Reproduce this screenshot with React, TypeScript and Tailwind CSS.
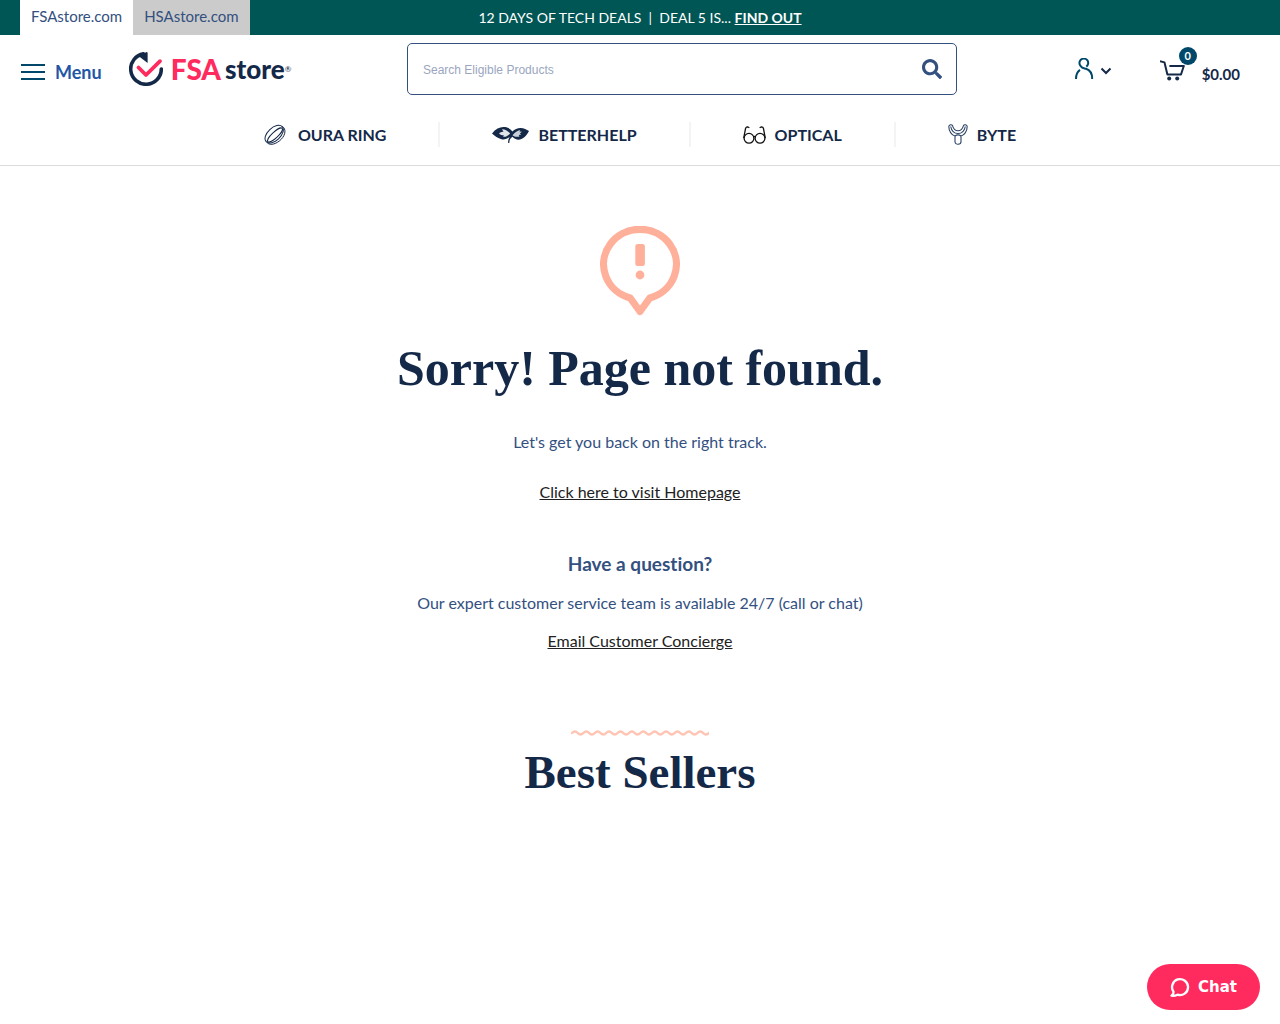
import type { ReactNode } from "react";
import { FaSearch } from "react-icons/fa";

const WAVE = "M1 4q2.9-3 5.7 0" + "t5.7 0".repeat(23);

function LogoMark() {
  return (
    <svg viewBox="0 0 34 34" className="h-[34px] w-[34px]" fill="none" aria-hidden="true">
      <path d="M14.500 1.900A15.300 15.300 0 1 0 32.300 17" stroke="#142848" strokeWidth="3.6" strokeLinecap="round" />
      <path d="M9.500 4 17.600 0c.6 0 1 .3 1 .9v10z" fill="#142848" />
      <path d="M9.500 15.500 17 23 31 9.200" stroke="#ff2b5f" strokeWidth="3.8" strokeLinecap="round" strokeLinejoin="round" />
    </svg>
  );
}

function UserIcon() {
  return (
    <svg viewBox="0 0 20 22" className="h-[22px] w-5" fill="none" stroke="#00486a" strokeWidth="2" aria-hidden="true">
      <path d="M12.300 8.600A4.400 4.400 0 1 0 6.800 8.200C8 10.300 10 10.200 12 10.800 16 12 18.200 15.500 18.200 21" />
      <path d="M2 21c0-4 1.200-7.200 4-9.100" />
    </svg>
  );
}

function CartIcon() {
  return (
    <svg viewBox="0 0 25 21" className="h-[21px] w-[25px]" fill="none" stroke="#142848" strokeWidth="2" aria-hidden="true">
      <path d="M0 1.200 4.500 2.400 7.400 14.500H21L23.800 6H9.400" strokeLinejoin="round" />
      <circle cx="9.200" cy="18.600" r="2" fill="#142848" stroke="none" />
      <circle cx="17.200" cy="18.600" r="2" fill="#142848" stroke="none" />
    </svg>
  );
}

function RingIcon() {
  return (
    <svg viewBox="0 0 22 22" className="h-[22px] w-[22px]" fill="none" stroke="#142848" aria-hidden="true">
      <ellipse cx="10.200" cy="10.200" rx="11" ry="6.400" transform="rotate(-43 10.200 10.200)" />
      <path d="M18.500 2.500c3.500 2.300 3.300 8-1.200 12.700S6.500 21.800 3.500 19" />
      <ellipse cx="11" cy="11" rx="9.800" ry="3" transform="rotate(-43 11 11)" />
    </svg>
  );
}

function LeavesIcon() {
  return (
    <svg viewBox="0 0 37 18" className="h-[18px] w-[37px]" aria-hidden="true">
      <path d="M0 7.500C4 2.500 8.500.5 13 1.100c3.500.5 5.800 2.400 7.400 4.400C22.500 3.300 25.500 2 28.500 2c3.500 0 6 1.500 8.500 3-2.500 5-6.500 8.500-10.500 8.700-2.500 0-4.500-1.200-6-2.900-2.200 1.600-3.200 3.200-3.200 6.200h-1.200c0-3 .6-4.700 1.700-6.200C15 13 12 14 9.500 13.300 6 12.200 2.500 10 0 7.500z" fill="#142848" />
      <path d="M7 7.200c1.500-1.200 3-1.700 4.500-1.400L10 3.200c3.500 0 6 2 8.200 4.300L16.500 9c-1.700 1.500-3.500 2-5.500 1.800l1-1.400c-2 0-4-.7-5-2.200z" fill="#dfe3ea" />
      <path d="M20.500 9.200c2-2.600 4.500-4.500 7.800-5.300l-.8 1.700 2.500.2-2.200 1.600 1.500 1.200-2.500.4.700 1.500c-2.500.6-5 .3-7-1.300z" fill="#c9d0da" />
    </svg>
  );
}

function GlassesIcon() {
  return (
    <svg viewBox="0 0 23 18" className="h-[18px] w-[23px]" fill="none" stroke="#111" strokeWidth="1.300" strokeLinecap="round" aria-hidden="true">
      <circle cx="6" cy="12.300" r="4.900" />
      <circle cx="17" cy="12.300" r="4.900" />
      <path d="M10.700 10.700q.8-.7 1.600 0M.8 11.500 2.600 2.300Q3.200.7 4.700.9l1.200.6M22.200 11.500 20.400 2.300Q19.800.7 18.300.9l-1.200.6" />
    </svg>
  );
}

function AlignerIcon() {
  return (
    <svg viewBox="0 0 20 21" className="h-[21px] w-5" fill="none" stroke="#2c4465" strokeWidth="1.100" aria-hidden="true">
      <path d="M.8 2.500C1 .6 3.800.1 4.600 1.800 5.500 4.800 7 6.700 10 6.700s4.500-1.900 5.400-4.900C16.200.1 19 .6 19.200 2.500c0 5-3.200 8.800-6.200 9.500v5.800c0 3.200-6 3.200-6 0V12C4 11.300.8 7.500.8 2.500z" />
      <path d="M2.700 2.500c.8 4.300 3.300 7 7.300 7s6.500-2.700 7.300-7M7 12q3-2.200 6 0" />
    </svg>
  );
}

function AlertIcon() {
  return (
    <svg viewBox="0 0 80 90" className="h-[90px] w-20" fill="none" aria-hidden="true">
      <path d="M40 85.500 30.200 72A36.400 35 0 1 1 49.800 72z" stroke="#ffb09a" strokeWidth="7.200" strokeLinejoin="round" />
      <rect x="35.300" y="18" width="9.600" height="22" rx="2.500" fill="#ffb09a" />
      <circle cx="40" cy="49" r="4.400" fill="#ffb09a" />
    </svg>
  );
}

const NAV_LINKS: { label: string; icon: ReactNode; gap: string }[] = [
  { label: "OURA RING", icon: <RingIcon />, gap: "gap-3" },
  { label: "BETTERHELP", icon: <LeavesIcon />, gap: "gap-[9px]" },
  { label: "OPTICAL", icon: <GlassesIcon />, gap: "gap-[9px]" },
  { label: "BYTE", icon: <AlignerIcon />, gap: "gap-[9px]" },
];

function TopBar() {
  return (
    <div className="grid h-[35px] grid-cols-[1fr_auto_1fr] bg-[#005555] px-5">
      <div className="flex text-[15px] leading-6 text-[#33507f]">
        <a href="#" className="bg-white px-[11px] pt-1">FSAstore.com</a>
        <a href="#" className="bg-[#cbcbcb] px-[11px] pt-1">HSAstore.com</a>
      </div>
      <p className="self-center text-sm whitespace-pre text-white">
        12 DAYS OF TECH DEALS  |  DEAL 5 IS...{" "}
        <a href="#" className="font-bold underline">FIND OUT</a>
      </p>
    </div>
  );
}

function Header() {
  return (
    <header className="border-b border-[#dcdcdc]">
      <div className="flex items-start px-5 pt-2">
        <div className="flex w-[387px] shrink-0 items-start pt-2">
          <button className="flex items-center gap-2.5 pt-[7px] text-lg font-bold text-[#2456a6]">
            <svg viewBox="0 0 25 16" className="h-4 w-[25px]" stroke="#00486a" strokeWidth="2" aria-hidden="true">
              <path d="M1 1h24M1 8h24M1 15h24" />
            </svg>
            Menu
          </button>
          <a href="#" className="ml-[27px] flex items-center pt-px" aria-label="FSA store">
            <LogoMark />
            <span className="ml-2 font-['Lato'] text-[28px] leading-8 font-black text-[#ff2b5f]">FSA</span>
            <span className="ml-1 font-['Lato'] text-[26px] leading-8 font-black text-[#142848]">store</span>
            <span className="text-[8px] text-[#142848]">®</span>
          </a>
        </div>
        <form className="flex h-[52px] max-w-[550px] flex-1 items-center rounded-[5px] border border-[#33507f] pr-3.5 pl-[15px]">
          <input
            type="text"
            aria-label="Search"
            placeholder="Search Eligible Products"
            className="min-w-0 flex-1 pt-0.5 font-['Liberation_Sans',sans-serif] text-xs outline-none placeholder:text-[#9aa6c0]"
          />
          <button type="button" aria-label="Submit search">
            <FaSearch className="h-5 w-5 text-[#33507f]" />
          </button>
        </form>
        <div className="ml-auto flex pt-1 pr-5">
          <button className="flex h-11 items-center gap-1.5" aria-label="Account">
            <UserIcon />
            <svg viewBox="0 0 12 8" className="mt-1 h-2 w-3" fill="none" stroke="#142848" strokeWidth="2" aria-hidden="true">
              <path d="m1.500 1.500 4.500 4.500 4.500-4.500" />
            </svg>
          </button>
          <a href="#" className="relative ml-12 flex h-[46px] items-center gap-[17px] text-[#142848]">
            <CartIcon />
            <span className="absolute top-0 left-[19px] flex h-[18px] w-[18px] items-center justify-center rounded-full bg-[#00486a] text-[11px] font-bold text-white">
              0
            </span>
            <span className="pt-2 text-[15px] font-bold">$0.00</span>
          </a>
        </div>
      </div>
      <nav className="flex items-center justify-center gap-[52px] pt-[27px] pb-[18px]">
        {NAV_LINKS.map((item, i) => (
          <div key={item.label} className="flex items-center gap-[52px]">
            {i > 0 && <span className="h-[25px] w-0.5 bg-[#f4f4f4]" />}
            <a href="#" className={`flex items-center text-base font-bold text-[#142848] ${item.gap}`}>
              {item.icon}
              {item.label}
            </a>
          </div>
        ))}
      </nav>
    </header>
  );
}

export default function App() {
  return (
    <div className="min-h-screen bg-white font-['Lato','Open_Sans',sans-serif] text-[#33507f] [font-variant-ligatures:none]">
      <TopBar />
      <Header />
      <main className="flex flex-col items-center px-5 pt-[60px] text-center text-base">
        <AlertIcon />
        <h1 className="mt-5 font-['Liberation_Serif',serif] text-[50px] leading-[64px] font-bold text-[#142848]">
          Sorry! Page not found.
        </h1>
        <p className="mt-[30px]">Let's get you back on the right track.</p>
        <a href="#" className="mt-[26px] text-[#212121] underline">Click here to visit Homepage</a>
        <h2 className="mt-[46px] text-[19px] leading-7 font-bold">Have a question?</h2>
        <p className="mt-[13px]">Our expert customer service team is available 24/7 (call or chat)</p>
        <a href="#" className="mt-3.5 text-[#212121] underline">Email Customer Concierge</a>
        <svg viewBox="0 0 138 7" className="mt-[76px] h-[7px] w-[138px]" fill="none" stroke="#ffc4b3" strokeWidth="2.500" strokeLinecap="round" aria-hidden="true">
          <path d={WAVE} />
        </svg>
        <h2 className="mt-2 font-['Liberation_Serif',serif] text-[47px] leading-[56px] font-bold text-[#142848]">
          Best Sellers
        </h2>
      </main>
      <button className="fixed right-5 bottom-3.5 flex h-[46px] w-[113px] items-center justify-center gap-2 rounded-full bg-[#ff2b5f] font-['DejaVu_Sans',sans-serif] text-[15px] font-bold text-white">
        <svg viewBox="0 0 20 20" className="h-5 w-5" fill="none" stroke="#fff" strokeWidth="2.300" strokeLinejoin="round" aria-hidden="true">
          <path d="M3.500 14.700A8 8 0 1 1 7.500 17.700Q5 19 1.500 18.700 3.800 17 3.500 14.700z" />
        </svg>
        Chat
      </button>
    </div>
  );
}
